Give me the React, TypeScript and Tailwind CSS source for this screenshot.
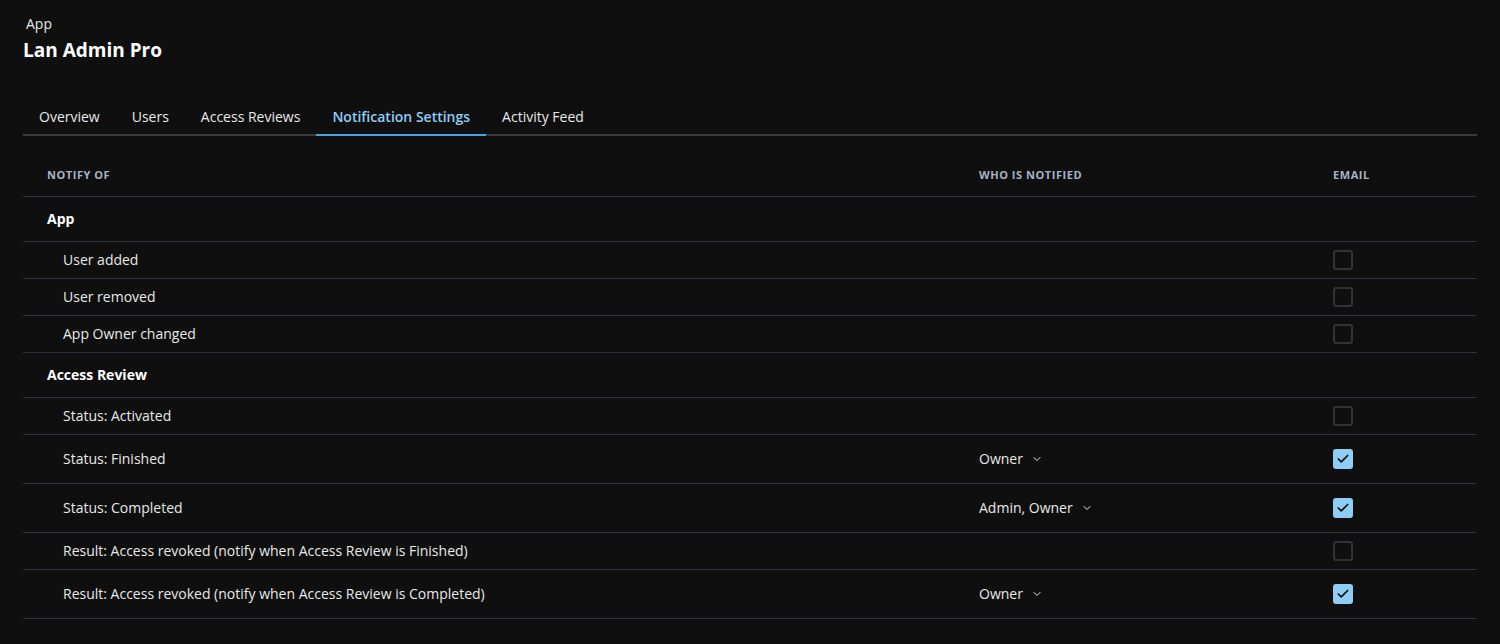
import { ChevronDown, Check } from "lucide-react";

type Row = { label: string; who?: string; checked?: boolean } | { group: string };

const rows: Row[] = [
  { group: "App" },
  { label: "User added" },
  { label: "User removed" },
  { label: "App Owner changed" },
  { group: "Access Review" },
  { label: "Status: Activated" },
  { label: "Status: Finished", who: "Owner", checked: true },
  { label: "Status: Completed", who: "Admin, Owner", checked: true },
  { label: "Result: Access revoked (notify when Access Review is Finished)" },
  { label: "Result: Access revoked (notify when Access Review is Completed)", who: "Owner", checked: true },
];

const tabs = ["Overview", "Users", "Access Reviews", "Notification Settings", "Activity Feed"];

function Box({ checked }: { checked?: boolean }) {
  return checked ? (
    <div className="w-5 h-5 rounded-[3px] bg-[#90cdf4] flex items-center justify-center">
      <Check className="w-3.5 h-3.5 text-[#111]" strokeWidth={3} />
    </div>
  ) : (
    <div className="w-5 h-5 rounded-[3px] border-2 border-[#333]" />
  );
}

export default function App() {
  return (
    <div className="min-h-screen bg-[#0f0f0f] text-[#e8e8e8] px-[23px] pt-[14px]" style={{ fontFamily: '"Open Sans", "Noto Sans", sans-serif' }}>
      <div className="text-sm pl-[3px] leading-5">App</div>
      <h1 className="text-[19px] font-bold text-white leading-7 mt-[2px]">Lan Admin Pro</h1>
      <div className="mt-[41px] flex border-b-2 border-[#3a3a3a]">
        {tabs.map((t) => {
          const active = t === "Notification Settings";
          return (
            <div key={t} className={`px-4 pb-[7px] pt-[2px] text-sm -mb-[2px] border-b-2 ${active ? "border-[#4da3e0] text-[#8ecdf7] font-semibold" : "border-transparent text-[#e8e8e8]"}`}>
              {t}
            </div>
          );
        })}
      </div>
      <div className="grid grid-cols-[956px_1fr_144px] text-sm">
        <div className="h-[61px] flex items-center pl-6 pt-[18px] text-[11px] font-bold tracking-wider text-[#a8b3c4] border-b border-[#2c3340]">NOTIFY OF</div>
        <div className="h-[61px] flex items-center pt-[18px] text-[11px] font-bold tracking-wider text-[#a8b3c4] border-b border-[#2c3340]">WHO IS NOTIFIED</div>
        <div className="h-[61px] flex items-center pt-[18px] text-[11px] font-bold tracking-wider text-[#a8b3c4] border-b border-[#2c3340]">EMAIL</div>
        {rows.map((r, i) =>
          "group" in r ? (
            <div key={i} className="col-span-3 h-[45px] flex items-center pl-6 font-bold text-white border-b border-[#2c3340]">{r.group}</div>
          ) : (
            <div key={i} className={`col-span-3 grid grid-cols-subgrid border-b border-[#2c3340] ${r.who ? "h-[49px]" : "h-[37px]"}`}>
              <div className="flex items-center pl-10">{r.label}</div>
              <div className="flex items-center">
                {r.who && (
                  <span className="flex items-center gap-2">
                    {r.who}
                    <ChevronDown className="w-3 h-3" />
                  </span>
                )}
              </div>
              <div className="flex items-center"><Box checked={r.checked} /></div>
            </div>
          )
        )}
      </div>
    </div>
  );
}
